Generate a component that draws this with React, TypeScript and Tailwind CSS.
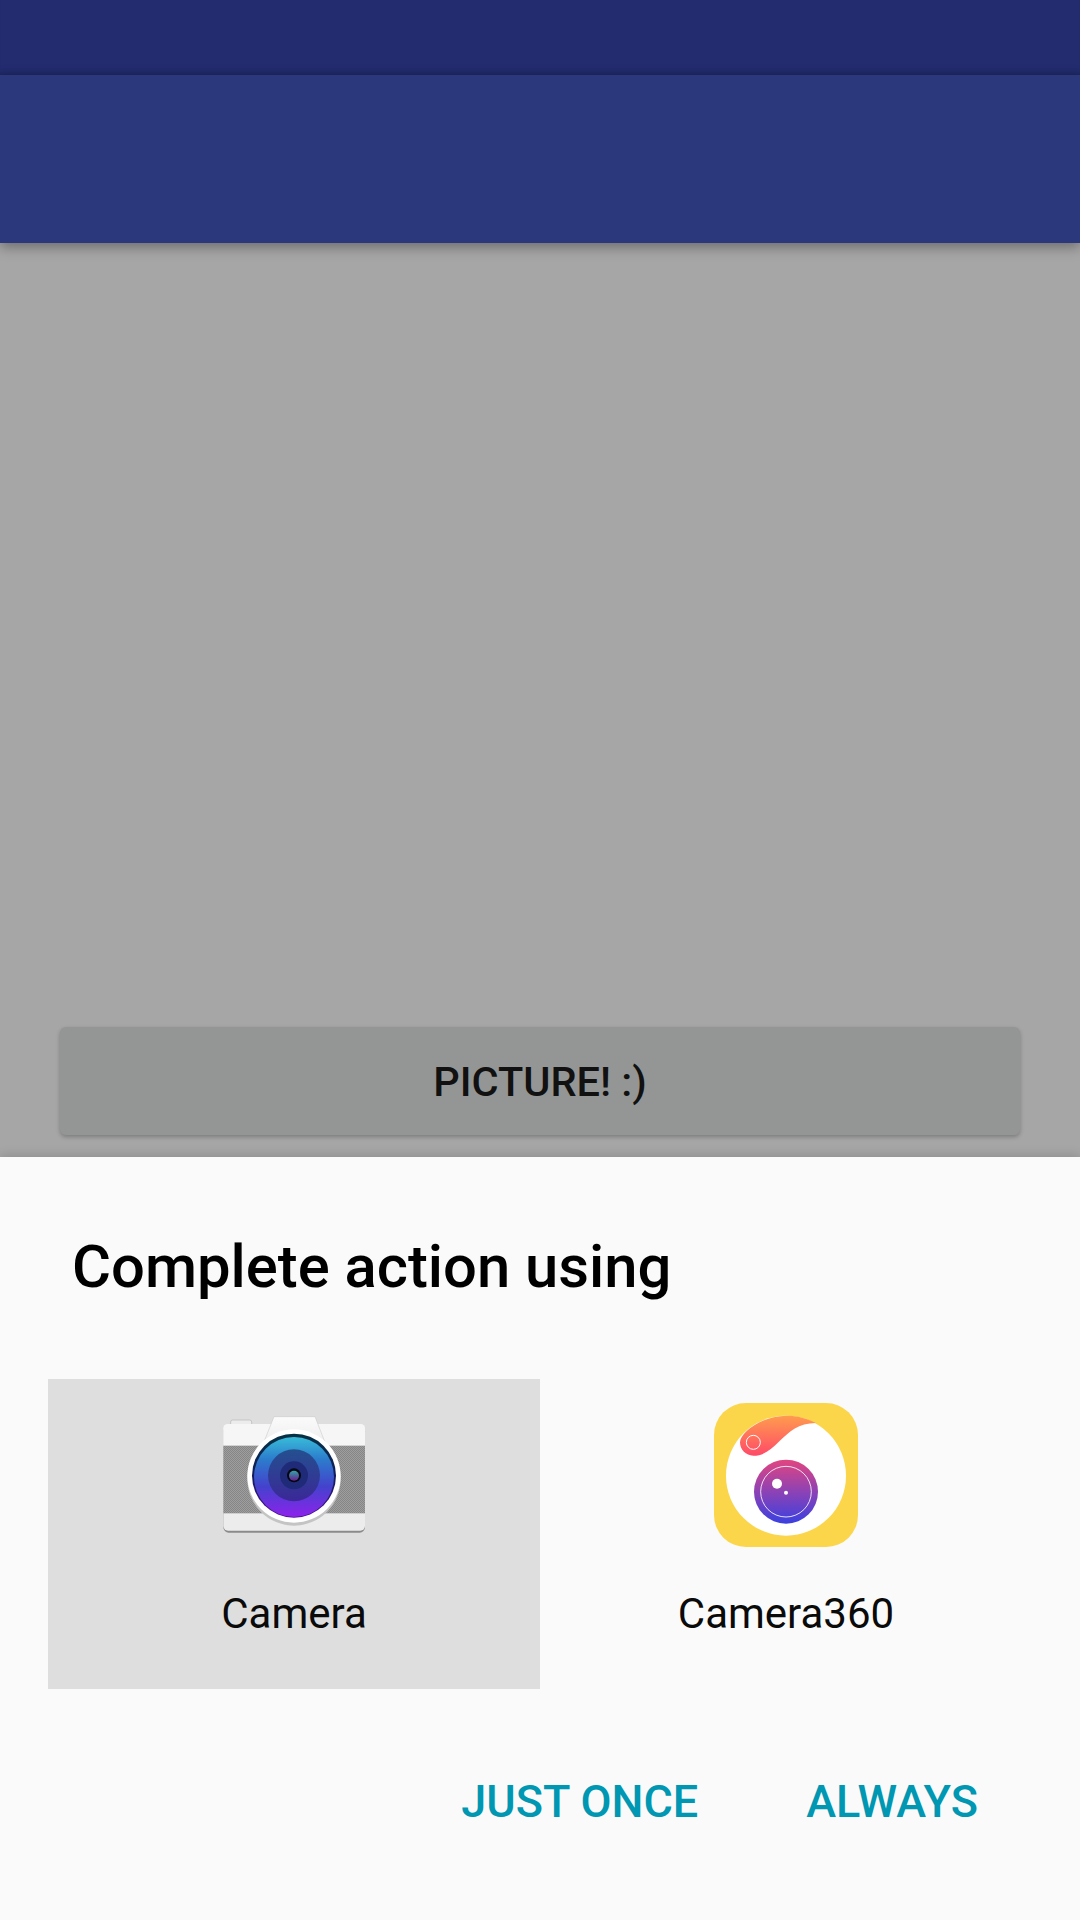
function CameraIcon() {
  return (
    <svg viewBox="66 39 432 432" className="h-[144px] w-[144px]">
      <defs>
        <linearGradient id="lens" x1="0" y1="0" x2="0" y2="1">
          <stop offset="0" stopColor="#38bcd8" />
          <stop offset="0.28" stopColor="#2c7ccc" />
          <stop offset="0.62" stopColor="#4442cc" />
          <stop offset="1" stopColor="#8d22ec" />
        </linearGradient>
        <linearGradient id="lensRim" x1="0" y1="0" x2="0" y2="1">
          <stop offset="0" stopColor="#063244" />
          <stop offset="0.5" stopColor="#101c5c" />
          <stop offset="1" stopColor="#45108c" />
        </linearGradient>
        <linearGradient id="lensInner" x1="0" y1="0" x2="0" y2="1">
          <stop offset="0" stopColor="#24508f" />
          <stop offset="1" stopColor="#3b2898" />
        </linearGradient>
        <linearGradient id="pupil" x1="0" y1="0" x2="0" y2="1">
          <stop offset="0" stopColor="#2fa5a8" />
          <stop offset="1" stopColor="#6a1f90" />
        </linearGradient>
        <linearGradient id="hump" x1="0" y1="0" x2="0" y2="1">
          <stop offset="0" stopColor="#fbfbfb" />
          <stop offset="1" stopColor="#ececec" />
        </linearGradient>
        <pattern id="grip" width="6" height="6" patternUnits="userSpaceOnUse">
          <rect width="6" height="6" fill="#9e9e9e" />
          <rect width="3" height="3" fill="#868686" />
          <rect x="3" y="3" width="3" height="3" fill="#868686" />
        </pattern>
      </defs>
      <rect x="92" y="90" width="63" height="30" rx="6" fill="#ececec" stroke="#b5b5b5" strokeWidth="2" />
      <rect x="70" y="108" width="425" height="320" rx="16" fill="#8a8a8a" />
      <rect x="70" y="102" width="425" height="320" rx="14" fill="#ececec" />
      <path d="M70 116a14 14 0 0 1 14-14H481a14 14 0 0 1 14 14V167H70Z" fill="#f6f6f6" />
      <rect x="70" y="167" width="425" height="203" fill="url(#grip)" />
      <path d="M222 80H345L380 170H186Z" fill="url(#hump)" stroke="#c4c4c4" strokeWidth="1.5" />
      <circle cx="282" cy="267" r="140" fill="#c4c4c4" />
      <circle cx="282" cy="258" r="140" fill="#ffffff" />
      <circle cx="282" cy="257" r="126" fill="url(#lensRim)" />
      <circle cx="282" cy="261" r="120" fill="url(#lens)" />
      <circle cx="282" cy="256" r="78" fill="url(#lensInner)" />
      <circle cx="282" cy="256" r="42" fill="#1f2a78" />
      <circle cx="282" cy="256" r="21" fill="#05060f" />
      <circle cx="282" cy="257" r="15" fill="url(#pupil)" />
    </svg>
  );
}

function Camera360Icon() {
  return (
    <svg viewBox="72 40 432 432" className="h-[144px] w-[144px]">
      <defs>
        <linearGradient id="swoosh" x1="0" y1="0" x2="0" y2="1">
          <stop offset="0" stopColor="#ff9c4e" />
          <stop offset="1" stopColor="#ff4a68" />
        </linearGradient>
        <linearGradient id="ball" x1="0" y1="0" x2="0" y2="1">
          <stop offset="0" stopColor="#e2457f" />
          <stop offset="0.5" stopColor="#8d42b5" />
          <stop offset="1" stopColor="#3a40e0" />
        </linearGradient>
      </defs>
      <rect x="72" y="40" width="432" height="432" rx="96" fill="#fbd64b" />
      <circle cx="288" cy="258" r="180" fill="#ffffff" />
      <path
        d="M150 158C150 128 215 78 290 78C322 78 352 86 378 100C325 100 298 126 268 155C245 177 225 198 190 198C168 198 150 180 150 158Z"
        fill="url(#swoosh)"
      />
      <circle cx="190" cy="158" r="21" fill="none" stroke="#ffffff" strokeWidth="3" />
      <circle cx="288" cy="306" r="96" fill="url(#ball)" />
      <circle cx="288" cy="306" r="76" fill="none" stroke="#ffffff" strokeWidth="2.5" />
      <circle cx="261" cy="282" r="15" fill="#ffffff" />
      <circle cx="288" cy="309" r="6" fill="#ffffff" />
    </svg>
  );
}

export default function App() {
  return (
    <div className="flex h-[1920px] w-[1080px] flex-col overflow-hidden bg-[#a6a6a6] font-['Roboto',sans-serif]">
      <div className="h-[75px] bg-[#222c6e] shadow-[inset_0_-6px_6px_-6px_rgba(0,0,0,0.25)]" />
      <div className="relative h-[168px] bg-[#2b387c] shadow-[0_4px_12px_rgba(0,0,0,0.35)]" />

      <div className="flex h-[914px] flex-col justify-end px-[60px] pb-[22px]">
        <div className="flex h-[108px] items-center justify-center rounded-[6px] bg-[#949695] pt-[2px] text-[41.5px] font-medium text-[#111111] shadow-[0_2px_4px_rgba(0,0,0,0.25)]">
          PICTURE! :)
        </div>
      </div>

      <div className="relative flex h-[763px] flex-col bg-[#fafafa] shadow-[0_-2px_10px_rgba(0,0,0,0.14)]">
        <h1 className="pl-[72px] pt-[73px] text-[59.75px] leading-[74px] font-medium text-black">Complete action using</h1>
        <div className="mt-[75px] flex px-[48px]">
          <div className="flex h-[310px] w-[492px] flex-col items-center bg-[#dedede] pt-[24px]">
            <CameraIcon />
            <span className="mt-[42px] text-[42px] leading-[50px] text-[#0a0a0a]">Camera</span>
          </div>
          <div className="flex h-[310px] w-[492px] flex-col items-center pt-[24px]">
            <Camera360Icon />
            <span className="mt-[42px] text-[42px] leading-[50px] text-[#0a0a0a]">Camera360</span>
          </div>
        </div>
        <div className="mt-[87px] flex justify-end gap-[108px] pr-[102px] text-[45px] leading-[52px] font-medium text-[#0097b2]">
          <span>JUST ONCE</span>
          <span>ALWAYS</span>
        </div>
      </div>
    </div>
  );
}
